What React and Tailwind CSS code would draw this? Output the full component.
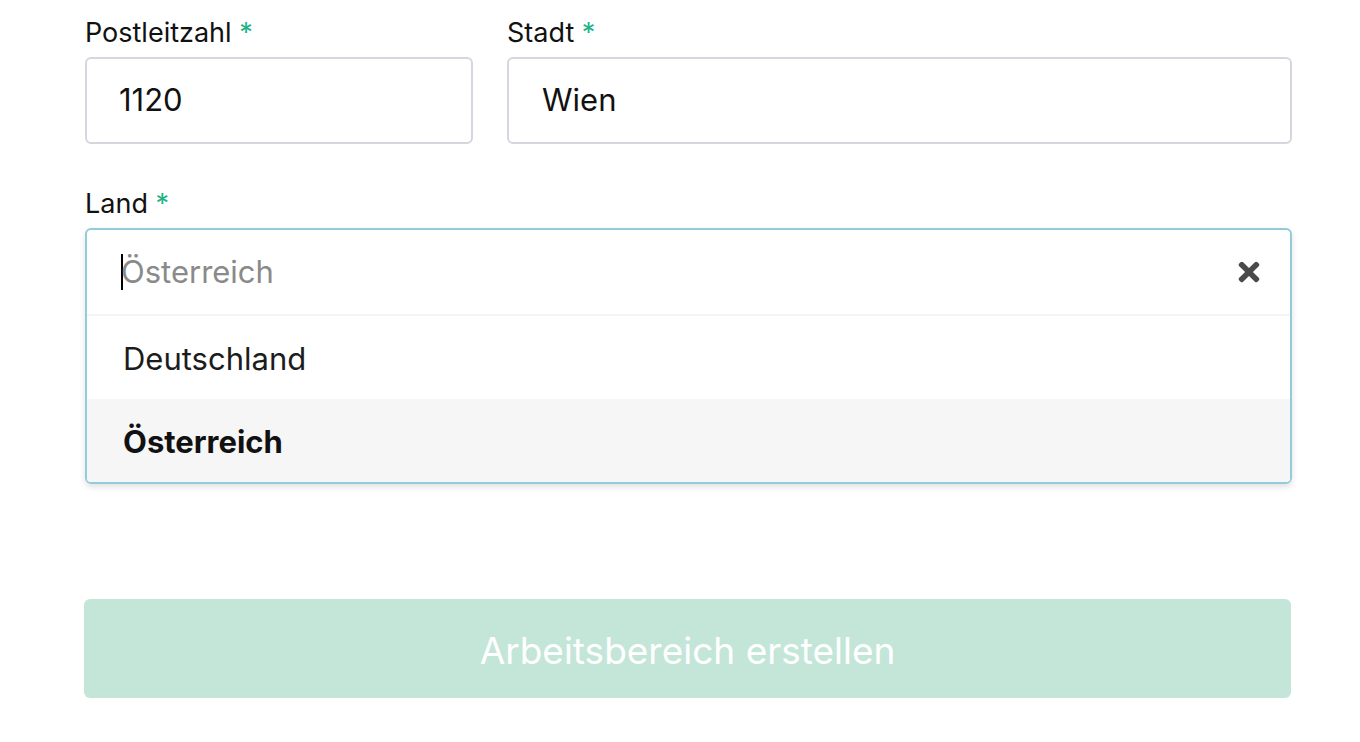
import React from "react";
import { FaTimes } from "react-icons/fa";

function Label({ children }) {
  return (
    <label className="block text-[27px] leading-[36px] text-[#111111] mb-[6px]">
      {children} <span className="text-[#1db487]">*</span>
    </label>
  );
}

export default function App() {
  return (
    <div className="min-h-screen bg-white font-['Inter',sans-serif] pl-[85px] pr-[68px] pt-[15px]">
      {/* Postleitzahl & Stadt */}
      <div className="flex gap-[34px]">
        <div className="w-[388px]">
          <Label>Postleitzahl</Label>
          <div className="h-[87px] border-2 border-[#d4d7df] rounded-[6px] px-[32px] flex items-center text-[31px] text-[#111111]">
            1120
          </div>
        </div>
        <div className="flex-1">
          <Label>Stadt</Label>
          <div className="h-[87px] border-2 border-[#d4d7df] rounded-[6px] px-[33px] flex items-center text-[31px] text-[#111111]">
            Wien
          </div>
        </div>
      </div>

      {/* Land */}
      <div className="mt-[42px]">
        <Label>Land</Label>
        <div className="border-2 border-[#93cbd9] rounded-[6px] shadow-[0_3px_6px_rgba(0,0,0,0.12)] overflow-hidden">
          <div className="h-[86px] flex items-center pl-[34px] pr-[26px] border-b-2 border-[#f3f4f5]">
            <span className="w-[2px] h-[36px] bg-black mr-[-2px]" />
            <span className="flex-1 text-[31px] text-[#8a8a8a]">Österreich</span>
            <FaTimes className="text-[#4a4a4a] text-[30px]" />
          </div>
          <div className="h-[83px] flex items-center pt-[4px] px-[36px] text-[31px] text-[#1c1c1c]">
            Deutschland
          </div>
          <div className="h-[83px] flex items-center pt-[4px] px-[36px] text-[31px] font-bold text-[#111111] bg-[#f6f6f6]">
            Österreich
          </div>
        </div>
      </div>

      {/* Submit */}
      <button className="mt-[115px] w-full h-[99px] pt-[4px] rounded-[6px] bg-[#c3e6d9] text-white text-[37px] ml-[-1px]">
        Arbeitsbereich erstellen
      </button>
    </div>
  );
}
